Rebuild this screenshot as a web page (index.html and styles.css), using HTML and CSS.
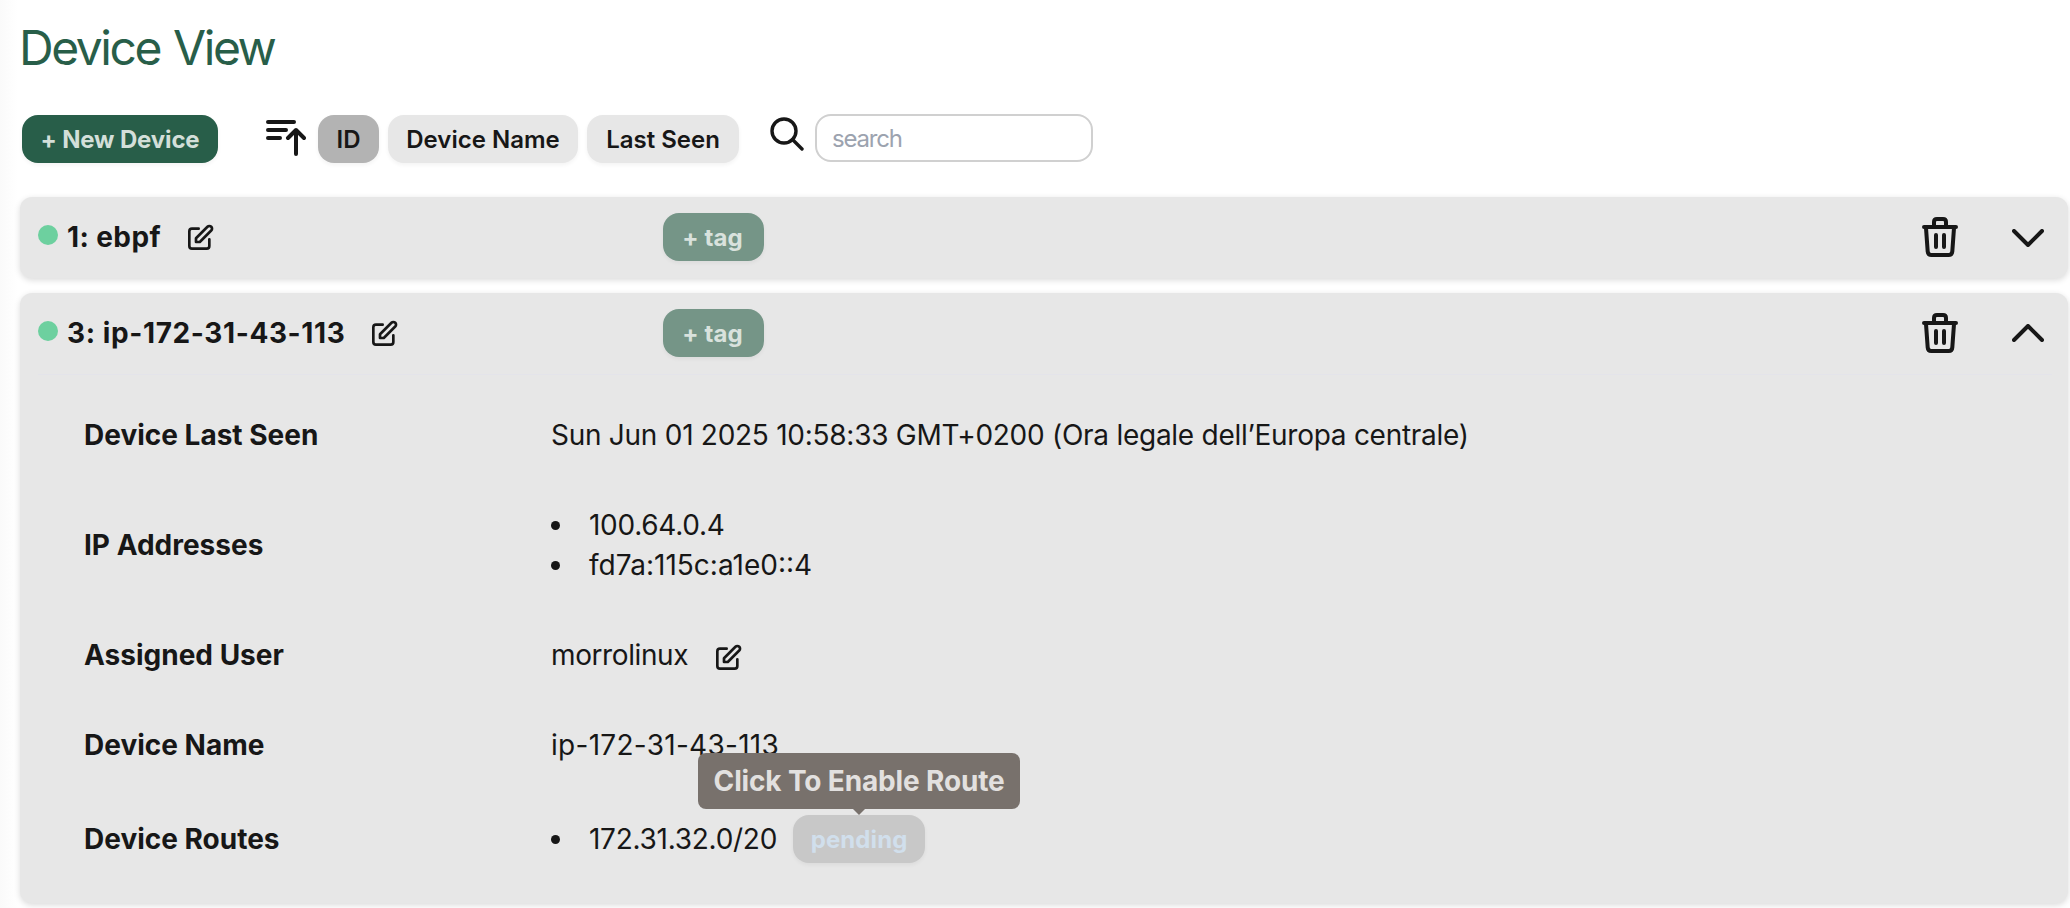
FILE: index.html
```html
<!DOCTYPE html>
<html lang="en">
<head>
<meta charset="utf-8">
<title>Device View</title>
<link rel="stylesheet" href="styles.css">
</head>
<body>
<svg class="defs" aria-hidden="true">
  <symbol id="edit" viewBox="0 0 24 24"><path d="M11 5H6a2 2 0 0 0-2 2v11a2 2 0 0 0 2 2h11a2 2 0 0 0 2-2v-5m-1.414-9.414a2 2 0 1 1 2.828 2.828L11.828 15H9v-2.828l8.586-8.586z"/></symbol>
  <symbol id="trash" viewBox="0 0 36 40"><path d="M2 10h32M12 10V5q0-3 3-3h6q3 0 3 3v5M4 11l1.700 23.500q.3 3.500 3.500 3.500h17.600q3.200 0 3.500-3.500L32 11M14 18v12M22 18v12"/></symbol>
</svg>
<main class="page">
  <h1 class="title">Device View</h1>
  <div class="toolbar">
    <button class="btn btn-primary">+ New Device</button>
    <svg class="sort" viewBox="0 0 40 36"><path d="M2 2h26M2 10h18M2 18h12M30 34V10M22 18l8-8 8 8"/></svg>
    <div class="filters">
      <button class="btn btn-active">ID</button>
      <button class="btn">Device Name</button>
      <button class="btn">Last Seen</button>
    </div>
    <svg class="lens" viewBox="0 0 34 34"><circle cx="14" cy="14" r="12"/><path d="M22.500 22.500L32 32"/></svg>
    <input class="search" placeholder="search">
  </div>
  <section class="card">
    <header class="head">
      <div class="name"><span class="dot"></span><span class="short">1: ebpf</span><svg class="edit"><use href="#edit"/></svg></div>
      <button class="btn btn-tag">+ tag</button>
      <svg class="trash"><use href="#trash"/></svg>
      <svg class="chevron" viewBox="0 0 32 18"><path d="M2 2l14 14L30 2"/></svg>
    </header>
  </section>
  <section class="card">
    <header class="head">
      <div class="name"><span class="dot"></span><span>3: ip-172-31-43-113</span><svg class="edit"><use href="#edit"/></svg></div>
      <button class="btn btn-tag">+ tag</button>
      <svg class="trash"><use href="#trash"/></svg>
      <svg class="chevron chevron-up" viewBox="0 0 32 18"><path d="M2 16L16 2l14 14"/></svg>
    </header>
    <div class="divider"></div>
    <dl class="details">
      <div class="row"><dt>Device Last Seen</dt><dd>Sun Jun 01 2025 10:58:33 GMT+0200 (Ora legale dell’Europa centrale)</dd></div>
      <div class="row"><dt>IP Addresses</dt><dd><ul class="list"><li>100.64.0.4</li><li class="v6">fd7a:115c:a1e0::4</li></ul></dd></div>
      <div class="row"><dt>Assigned User</dt><dd class="user">morrolinux<svg class="edit"><use href="#edit"/></svg></dd></div>
      <div class="row"><dt>Device Name</dt><dd class="host">ip-172-31-43-113</dd></div>
      <div class="row"><dt>Device Routes</dt><dd><ul class="list"><li>172.31.32.0/20<span class="tip-wrap"><button class="btn btn-pending">pending</button><span class="tip">Click To Enable Route</span></span></li></ul></dd></div>
    </dl>
  </section>
</main>
</body>
</html>
```
FILE: styles.css
```css
* { box-sizing: border-box; }
body {
  margin: 0;
  height: 908px;
  overflow: hidden;
  background: linear-gradient(to right, #fafafa, #fff 18px);
  color: #171717;
  font: 28px/40px Inter, "Liberation Sans", sans-serif;
}
.defs { position: absolute; width: 0; height: 0; }
svg { fill: none; stroke: currentColor; stroke-width: 4; stroke-linecap: round; stroke-linejoin: round; flex: none; display: block; }
.page { padding: 12px 2px 0 20px; }
.title { margin: 0 0 31px -1px; height: 72px; font-size: 48px; line-height: 72px; font-weight: 400; color: #285e49; letter-spacing: -2.45px; word-spacing: 2px; }
.toolbar { display: flex; height: 48px; margin: 0 0 34px 2px; }
.btn {
  height: 48px; padding: 1px 0 0; border: 0; border-radius: 16px;
  background: #e7e7e7; color: #171717;
  font: 600 24px/47px Inter, "Liberation Sans", sans-serif;
  box-shadow: 0 2px 4px rgba(0,0,0,.05);
  flex: none; white-space: nowrap;
}
.btn-primary { width: 196px; background: #285e49; color: #d3dfd9; font-weight: 700; letter-spacing: -.15px; }
.sort { width: 40px; height: 36px; margin: 5px 12px 0 48px; }
.filters { display: flex; gap: 9px; }
.filters .btn:nth-child(1) { width: 61px; background: #b3b3b3; }
.filters .btn:nth-child(2) { width: 190px; }
.filters .btn:nth-child(3) { width: 152px; }
.lens { width: 34px; height: 34px; margin: 2px 11px 0 31px; stroke-width: 3.4; }
.search { width: 278px; height: 48px; margin-top: -1px; padding: 1px 15px 0; border: 2px solid #d0d0d0; border-radius: 16px; background: #fff; font: 24px Inter, "Liberation Sans", sans-serif; letter-spacing: -1.2px; }
.search::placeholder { color: #9ca3af; }
.card { margin-bottom: 15px; border-radius: 12px; background: #e7e7e7; box-shadow: 0 2px 6px rgba(0,0,0,.15); }
.head { display: flex; align-items: center; height: 81px; padding: 0 24px 2px 18px; }
.name { display: flex; align-items: center; width: 625px; font-weight: 700; letter-spacing: .6px; }
.short { letter-spacing: .4px; }
.dot { width: 20px; height: 20px; margin: -4px 9px 0 0; border-radius: 50%; background: #6dd09f; }
.edit { width: 32px; height: 32px; margin: 3px 0 0 23px; stroke-width: 2; }
.btn-tag { width: 101px; padding-right: 2px; background: #759587; color: #d9e2dd; font-weight: 700; letter-spacing: .1px; }
.trash { width: 36px; height: 40px; margin-left: auto; }
.chevron { width: 32px; height: 18px; margin: 2px 0 0 54px; }
.chevron-up { margin-top: 0; }
.divider { height: 1px; margin: 0 16px 0 18px; background: #e4e4ea; }
.details { margin: 0; padding: 15px 0 15px 64px; }
.row { display: grid; grid-template-columns: 467px 1fr; align-items: center; padding: 25px 0; }
dt { font-weight: 700; }
dd { margin: 0; letter-spacing: -.27px; }
.user { display: flex; align-items: center; letter-spacing: -.4px; }
.user .edit { margin: 5px 0 0 24px; }
.host { letter-spacing: .28px; }
.list { margin: 0; padding: 0; list-style: none; }
.list li { display: flex; align-items: center; }
.list .v6 { letter-spacing: 0; }
.list li::before { content: ""; width: 9px; height: 9px; margin-right: 29px; border-radius: 50%; background: currentColor; }
.tip-wrap { position: relative; display: flex; margin-left: 16px; }
.btn-pending { width: 132px; background: #c8c8c8; color: #d1dfec; font-weight: 700; letter-spacing: .1px; }
.tip { position: absolute; left: 50%; bottom: 54px; width: 322px; height: 56px; transform: translateX(-50%); border-radius: 8px; background: #78716c; color: #e2e0df; font-weight: 700; line-height: 56px; text-align: center; white-space: nowrap; letter-spacing: -.15px; }
.tip::after { content: ""; position: absolute; left: 50%; top: 100%; margin-left: -6px; border: 6px solid transparent; border-top-color: #78716c; border-bottom: 0; }
```
